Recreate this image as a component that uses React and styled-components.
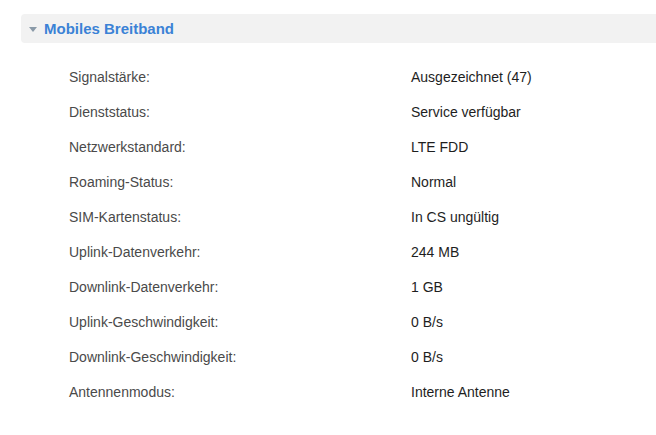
import React from "react";
import styled, { createGlobalStyle } from "styled-components";

const rows = [
  ["Signalstärke:", "Ausgezeichnet (47)"],
  ["Dienststatus:", "Service verfügbar"],
  ["Netzwerkstandard:", "LTE FDD"],
  ["Roaming-Status:", "Normal"],
  ["SIM-Kartenstatus:", "In CS ungültig"],
  ["Uplink-Datenverkehr:", "244 MB"],
  ["Downlink-Datenverkehr:", "1 GB"],
  ["Uplink-Geschwindigkeit:", "0 B/s"],
  ["Downlink-Geschwindigkeit:", "0 B/s"],
  ["Antennenmodus:", "Interne Antenne"],
];

const App = () => {
  return (
    <>
      <GlobalStyle />
      <Page>
        <SectionHeader>
          <Caret />
          <Title>Mobiles Breitband</Title>
        </SectionHeader>
        <InfoList>
          {rows.map(([label, value]) => (
            <Row key={label}>
              <Label>{label}</Label>
              <Value>{value}</Value>
            </Row>
          ))}
        </InfoList>
      </Page>
    </>
  );
};

const GlobalStyle = createGlobalStyle`
  html, body {
    margin: 0;
    padding: 0;
    background: #ffffff;
  }
  body {
    font-family: "Liberation Sans", Arial, sans-serif;
  }
`;

const Page = styled.div`
  width: 656px;
  height: 435px;
  overflow: hidden;
  padding-top: 14px;
  padding-left: 21px;
  box-sizing: border-box;
`;

const SectionHeader = styled.div`
  display: flex;
  align-items: center;
  height: 29px;
  background: #f2f2f2;
  border-radius: 4px 0 0 4px;
  padding-left: 8px;
`;

const Caret = styled.span`
  width: 0;
  height: 0;
  border-left: 4.5px solid transparent;
  border-right: 4.5px solid transparent;
  border-top: 5px solid #8a9aa8;
  margin-right: 7px;
  margin-top: 2px;
`;

const Title = styled.span`
  font-size: 15px;
  font-weight: bold;
  color: #3b82d6;
`;

const InfoList = styled.div`
  margin-top: 16px;
  padding-left: 48px;
`;

const Row = styled.div`
  display: flex;
  align-items: center;
  height: 35px;
  font-size: 14px;
`;

const Label = styled.div`
  width: 342px;
  color: #4a4a4a;
`;

const Value = styled.div`
  color: #1e1e1e;
`;

export default App;
